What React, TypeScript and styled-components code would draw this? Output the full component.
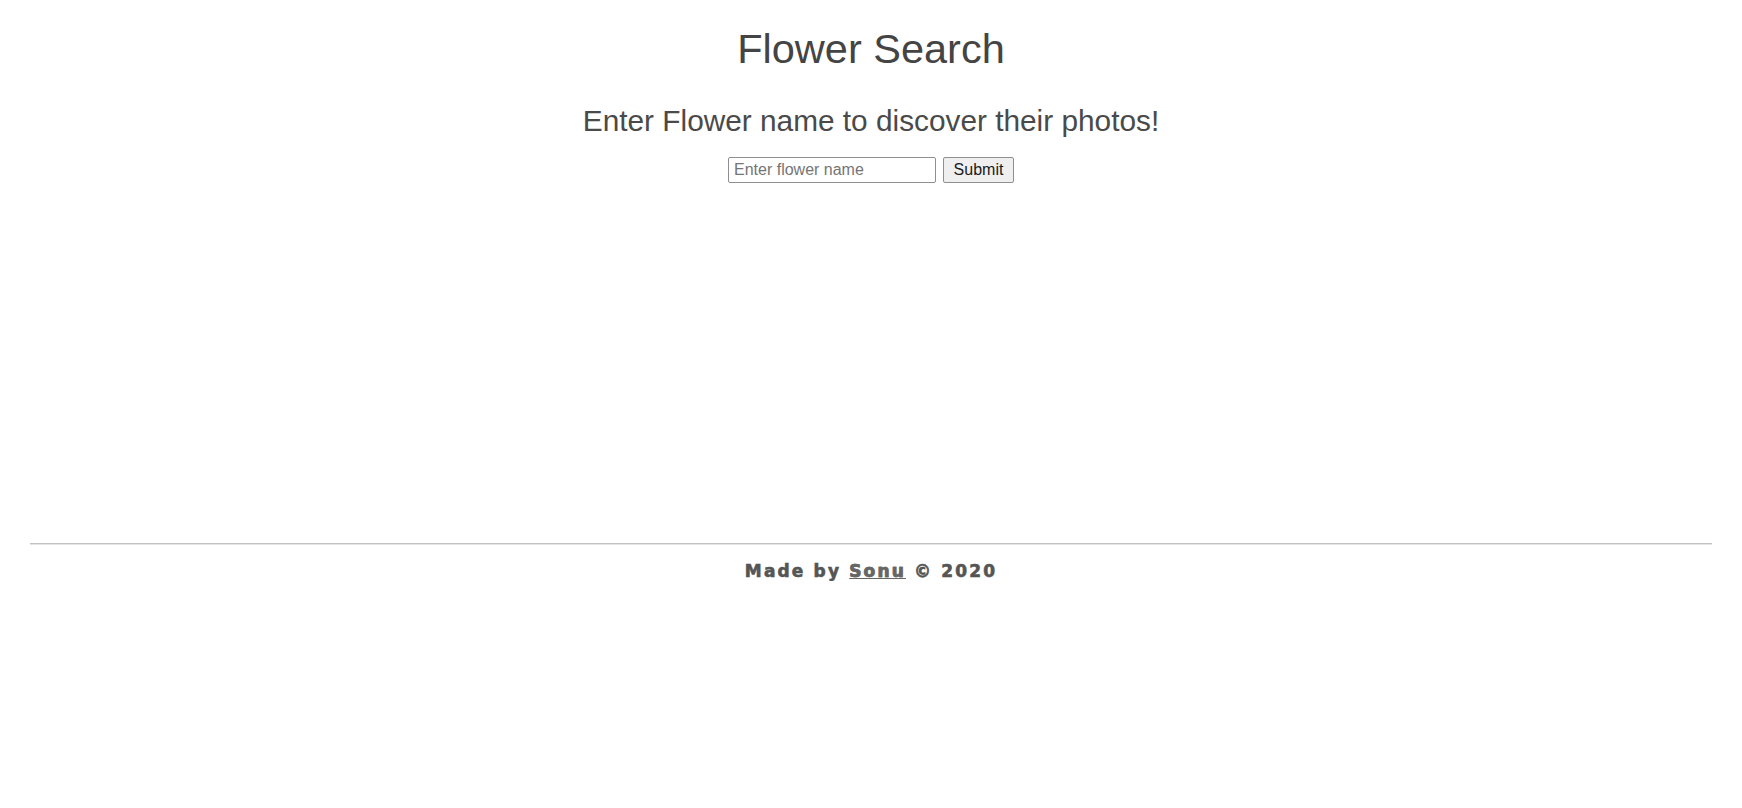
import React from "react";
import styled, { createGlobalStyle } from "styled-components";

const Global = createGlobalStyle`
  html, body {
    margin: 0;
    padding: 0;
    background: #ffffff;
  }
  body {
    font-family: "Liberation Sans", Arial, sans-serif;
    color: #444444;
  }
`;

const Page = styled.div`
  display: flex;
  flex-direction: column;
  align-items: center;
  width: 100%;
`;

const Title = styled.h1`
  margin: 25px 0 0;
  font-size: 41.5px;
  line-height: 48px;
  font-weight: normal;
  color: #444444;
`;

const Subtitle = styled.h2`
  margin: 31px 0 0;
  font-size: 29.8px;
  line-height: 34px;
  font-weight: normal;
  color: #4a4a4a;
`;

const Form = styled.form`
  display: flex;
  align-items: center;
  gap: 7px;
  margin-top: 19px;
`;

const Input = styled.input`
  box-sizing: border-box;
  width: 208px;
  height: 26px;
  padding: 0 5px;
  border: 1px solid #8f8f8f;
  border-radius: 2px;
  font-family: "Liberation Sans", Arial, sans-serif;
  font-size: 16px;
  color: #222;
  background: #fff;
  outline: none;
  &::placeholder {
    color: #757575;
  }
`;

const Button = styled.button`
  box-sizing: border-box;
  width: 71px;
  height: 26px;
  padding: 0;
  border: 1px solid #8f8f8f;
  border-radius: 2px;
  background: #efefef;
  font-family: "Liberation Sans", Arial, sans-serif;
  font-size: 16px;
  color: #1a1a1a;
`;

const Results = styled.section`
  width: 100%;
  height: 360px;
`;

const Footer = styled.footer`
  width: 100%;
  display: flex;
  flex-direction: column;
  align-items: center;
`;

const Rule = styled.hr`
  align-self: stretch;
  margin: 0 30px;
  height: 0;
  border: none;
  border-top: 1px solid #c2c2c2;
  border-bottom: 1px solid #e4e4e4;
`;

const Credit = styled.p`
  margin: 16px 0 0;
  font-family: "DejaVu Sans", Verdana, sans-serif;
  font-weight: bold;
  font-size: 17px;
  line-height: 20px;
  letter-spacing: 2.15px;
  color: #555555;
  -webkit-text-stroke: 0.5px #555555;
  text-shadow: 0 0 1px rgba(85, 85, 85, 0.4);
`;

const Author = styled.a`
  color: #666666;
  -webkit-text-stroke: 0.5px #666666;
  text-decoration: underline;
`;

export default function App() {
  return (
    <>
      <Global />
      <Page>
        <Title>Flower Search</Title>
        <Subtitle>Enter Flower name to discover their photos!</Subtitle>
        <Form onSubmit={(e) => e.preventDefault()}>
          <Input type="text" placeholder="Enter flower name" />
          <Button type="submit">Submit</Button>
        </Form>
        <Results />
        <Footer>
          <Rule />
          <Credit>
            Made by <Author href="#">Sonu</Author> © 2020
          </Credit>
        </Footer>
      </Page>
    </>
  );
}
